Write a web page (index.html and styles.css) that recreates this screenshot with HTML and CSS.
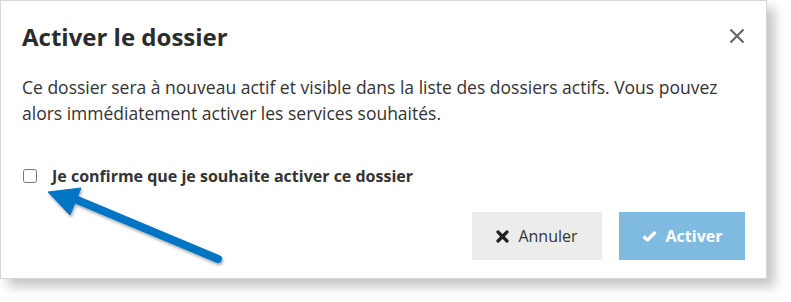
FILE: index.html
```html
<!DOCTYPE html>
<html lang="fr">
<head>
<meta charset="utf-8">
<title>Activer le dossier</title>
<link rel="stylesheet" href="styles.css">
</head>
<body>
<div class="modal">
  <div class="modal-header">
    <h2 class="modal-title">Activer le dossier</h2>
    <button class="close" aria-label="Fermer">
      <svg width="16" height="16" viewBox="0 0 16 16"><path d="M1.5 1.5 L14.5 14.5 M14.5 1.5 L1.5 14.5" stroke="#666" stroke-width="2.2" fill="none"/></svg>
    </button>
  </div>
  <p class="modal-text">Ce dossier sera à nouveau actif et visible dans la liste des dossiers actifs. Vous pouvez alors immédiatement activer les services souhaités.</p>
  <label class="confirm">
    <input type="checkbox" class="check">
    <span>Je confirme que je souhaite activer ce dossier</span>
  </label>
  <div class="modal-footer">
    <button class="btn btn-cancel">
      <svg width="13" height="13" viewBox="0 0 13 13"><path d="M2 2 L11 11 M11 2 L2 11" stroke="#222" stroke-width="3.2" stroke-linecap="round" fill="none"/></svg>
      Annuler
    </button>
    <button class="btn btn-primary" disabled>
      <svg width="15" height="12" viewBox="0 0 15 12"><path d="M1.5 6.5 L5.5 10 L13.5 2" stroke="#fff" stroke-width="3.2" fill="none" stroke-linejoin="round"/></svg>
      Activer
    </button>
  </div>
</div>
<svg class="annotation" width="240" height="150" viewBox="0 0 240 150">
  <defs>
    <filter id="sh" x="-20%" y="-20%" width="140%" height="160%">
      <feDropShadow dx="1" dy="2" stdDeviation="1.5" flood-color="#000" flood-opacity="0.35"/>
    </filter>
  </defs>
  <g filter="url(#sh)" fill="#0075c4" stroke="#0075c4">
    <line x1="218" y1="109" x2="70" y2="47" stroke-width="8" stroke-linecap="round"/>
    <polygon points="48,42 81,38 70,65" stroke-width="1" stroke-linejoin="round"/>
  </g>
</svg>
</body>
</html>
```
FILE: styles.css
```css
* { box-sizing: border-box; }
body {
  margin: 0;
  background: #fff;
  font-family: "Open Sans", "Noto Sans", sans-serif;
  color: #333;
  position: relative;
  width: 791px;
  height: 302px;
  overflow: hidden;
}
.modal {
  width: 767px;
  height: 279px;
  border: 1px solid #d6d6d6;
  background: #fff;
  box-shadow: 8px 8px 10px rgba(0,0,0,0.22);
  padding: 0 21px 0 21px;
  display: flex;
  flex-direction: column;
}
.modal-header {
  display: flex;
  justify-content: space-between;
  align-items: center;
  height: 66px;
  padding-top: 4px;
}
.modal-title {
  margin: 0;
  font-size: 24px;
  font-weight: 700;
  color: #2b2b2b;
}
.close {
  border: 0;
  background: none;
  padding: 0;
  width: 16px;
  height: 16px;
  display: flex;
}
.modal-text {
  margin: 7px 0 0;
  font-size: 17.5px;
  line-height: 26px;
  color: #333;
}
.confirm {
  display: flex;
  align-items: center;
  gap: 15px;
  margin-top: 39px;
  font-size: 16px;
  font-weight: 700;
  color: #333;
}
.check {
  margin: 0 0 0 1px;
  width: 14px;
  height: 14px;
}
.modal-footer {
  display: flex;
  justify-content: flex-end;
  gap: 17px;
  margin-top: 25px;
}
.btn {
  height: 48px;
  border: 0;
  font-family: inherit;
  font-size: 16px;
  display: flex;
  align-items: center;
  justify-content: center;
  gap: 9px;
  padding: 0;
}
.btn-cancel {
  width: 130px;
  background: #ececec;
  color: #333;
}
.btn-primary {
  width: 126px;
  background: #7fbbe0;
  color: #fff;
  font-weight: 700;
}
.annotation {
  position: absolute;
  left: 0;
  top: 150px;
}
```
